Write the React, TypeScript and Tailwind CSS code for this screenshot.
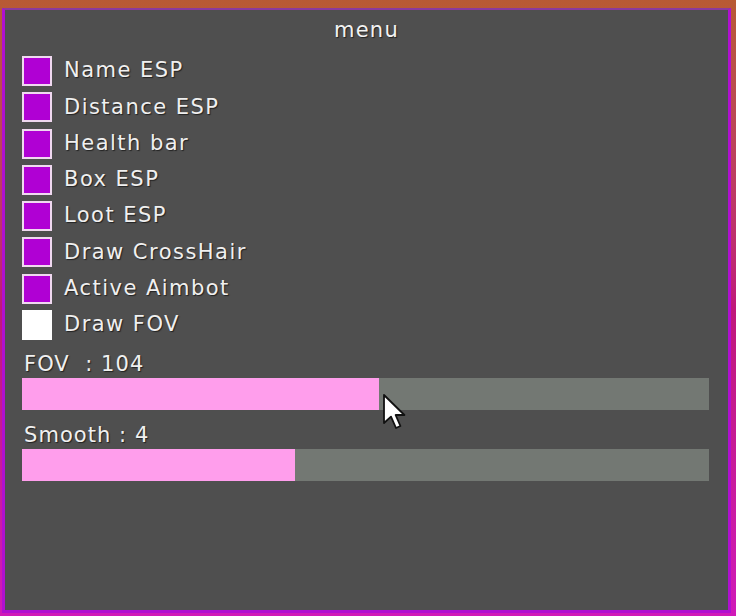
import React from 'react';

const items = [
  { label: 'Name ESP', on: true },
  { label: 'Distance ESP', on: true },
  { label: 'Health bar', on: true },
  { label: 'Box ESP', on: true },
  { label: 'Loot ESP', on: true },
  { label: 'Draw CrossHair', on: true },
  { label: 'Active Aimbot', on: true },
  { label: 'Draw FOV', on: false },
];

const font = { fontFamily: '"DejaVu Sans", Verdana, sans-serif' };

function Slider({ label, pct }: { label: string; pct: number }) {
  return (
    <div className="flex flex-col">
      <span className="pl-[2px] text-[21px] leading-[28px] tracking-[0.05em] text-[#f0f0f0] whitespace-pre [text-shadow:1px_1px_1px_#222]">{label}</span>
      <div className="h-[32px] w-[687px] bg-[#737873] flex">
        <div className="h-full bg-[#ff9eec]" style={{ width: `${pct}%` }} />
      </div>
    </div>
  );
}

export default function App() {
  return (
    <div
      className="w-[736px] h-[616px] pt-[8px] pl-[2px] pr-[5px] pb-[3px] bg-gradient-to-b from-[#b85a34] via-[#c0187a] to-[#d01ab8]"
      style={font}
    >
      <div className="relative h-full border-[3px] border-[#b010d0] border-t-[2px] border-t-[#8a3a9e] bg-[#4f4f4f] px-[17px]">
        <div className="h-[40px] flex items-center justify-center text-[21px] tracking-[0.06em] text-[#f2f2f2] pt-[1px] [text-shadow:1px_1px_1px_#222]">
          menu
        </div>
        <div className="flex flex-col gap-[6.3px] mt-[6px]">
          {items.map((it) => (
            <div key={it.label} className="flex items-center h-[30px]">
              <div
                className={`w-[30px] h-[30px] border-[2px] ${it.on ? 'bg-[#b000d4] border-[#f0d8f0]' : 'bg-white border-white'}`}
              />
              <span className="ml-[12px] text-[21px] tracking-[0.07em] text-[#f0f0f0] [text-shadow:1px_1px_1px_#222]">
                {it.label}
              </span>
            </div>
          ))}
        </div>
        <div className="flex flex-col gap-[11px] mt-[10px]">
          <Slider label={'FOV  : 104'} pct={52} />
          <Slider label={'Smooth : 4'} pct={39.7} />
        </div>
        <svg
          className="absolute left-[377px] top-[383px]"
          width="26"
          height="40"
          viewBox="0 0 13 20"
        >
          <path
            d="M1 1 L1 15 L4.5 11.8 L7 17.5 L9.2 16.5 L6.8 11 L11.2 11 Z"
            fill="#fff"
            stroke="#111"
            strokeWidth="0.9"
            strokeLinejoin="round"
          />
        </svg>
      </div>
    </div>
  );
}
